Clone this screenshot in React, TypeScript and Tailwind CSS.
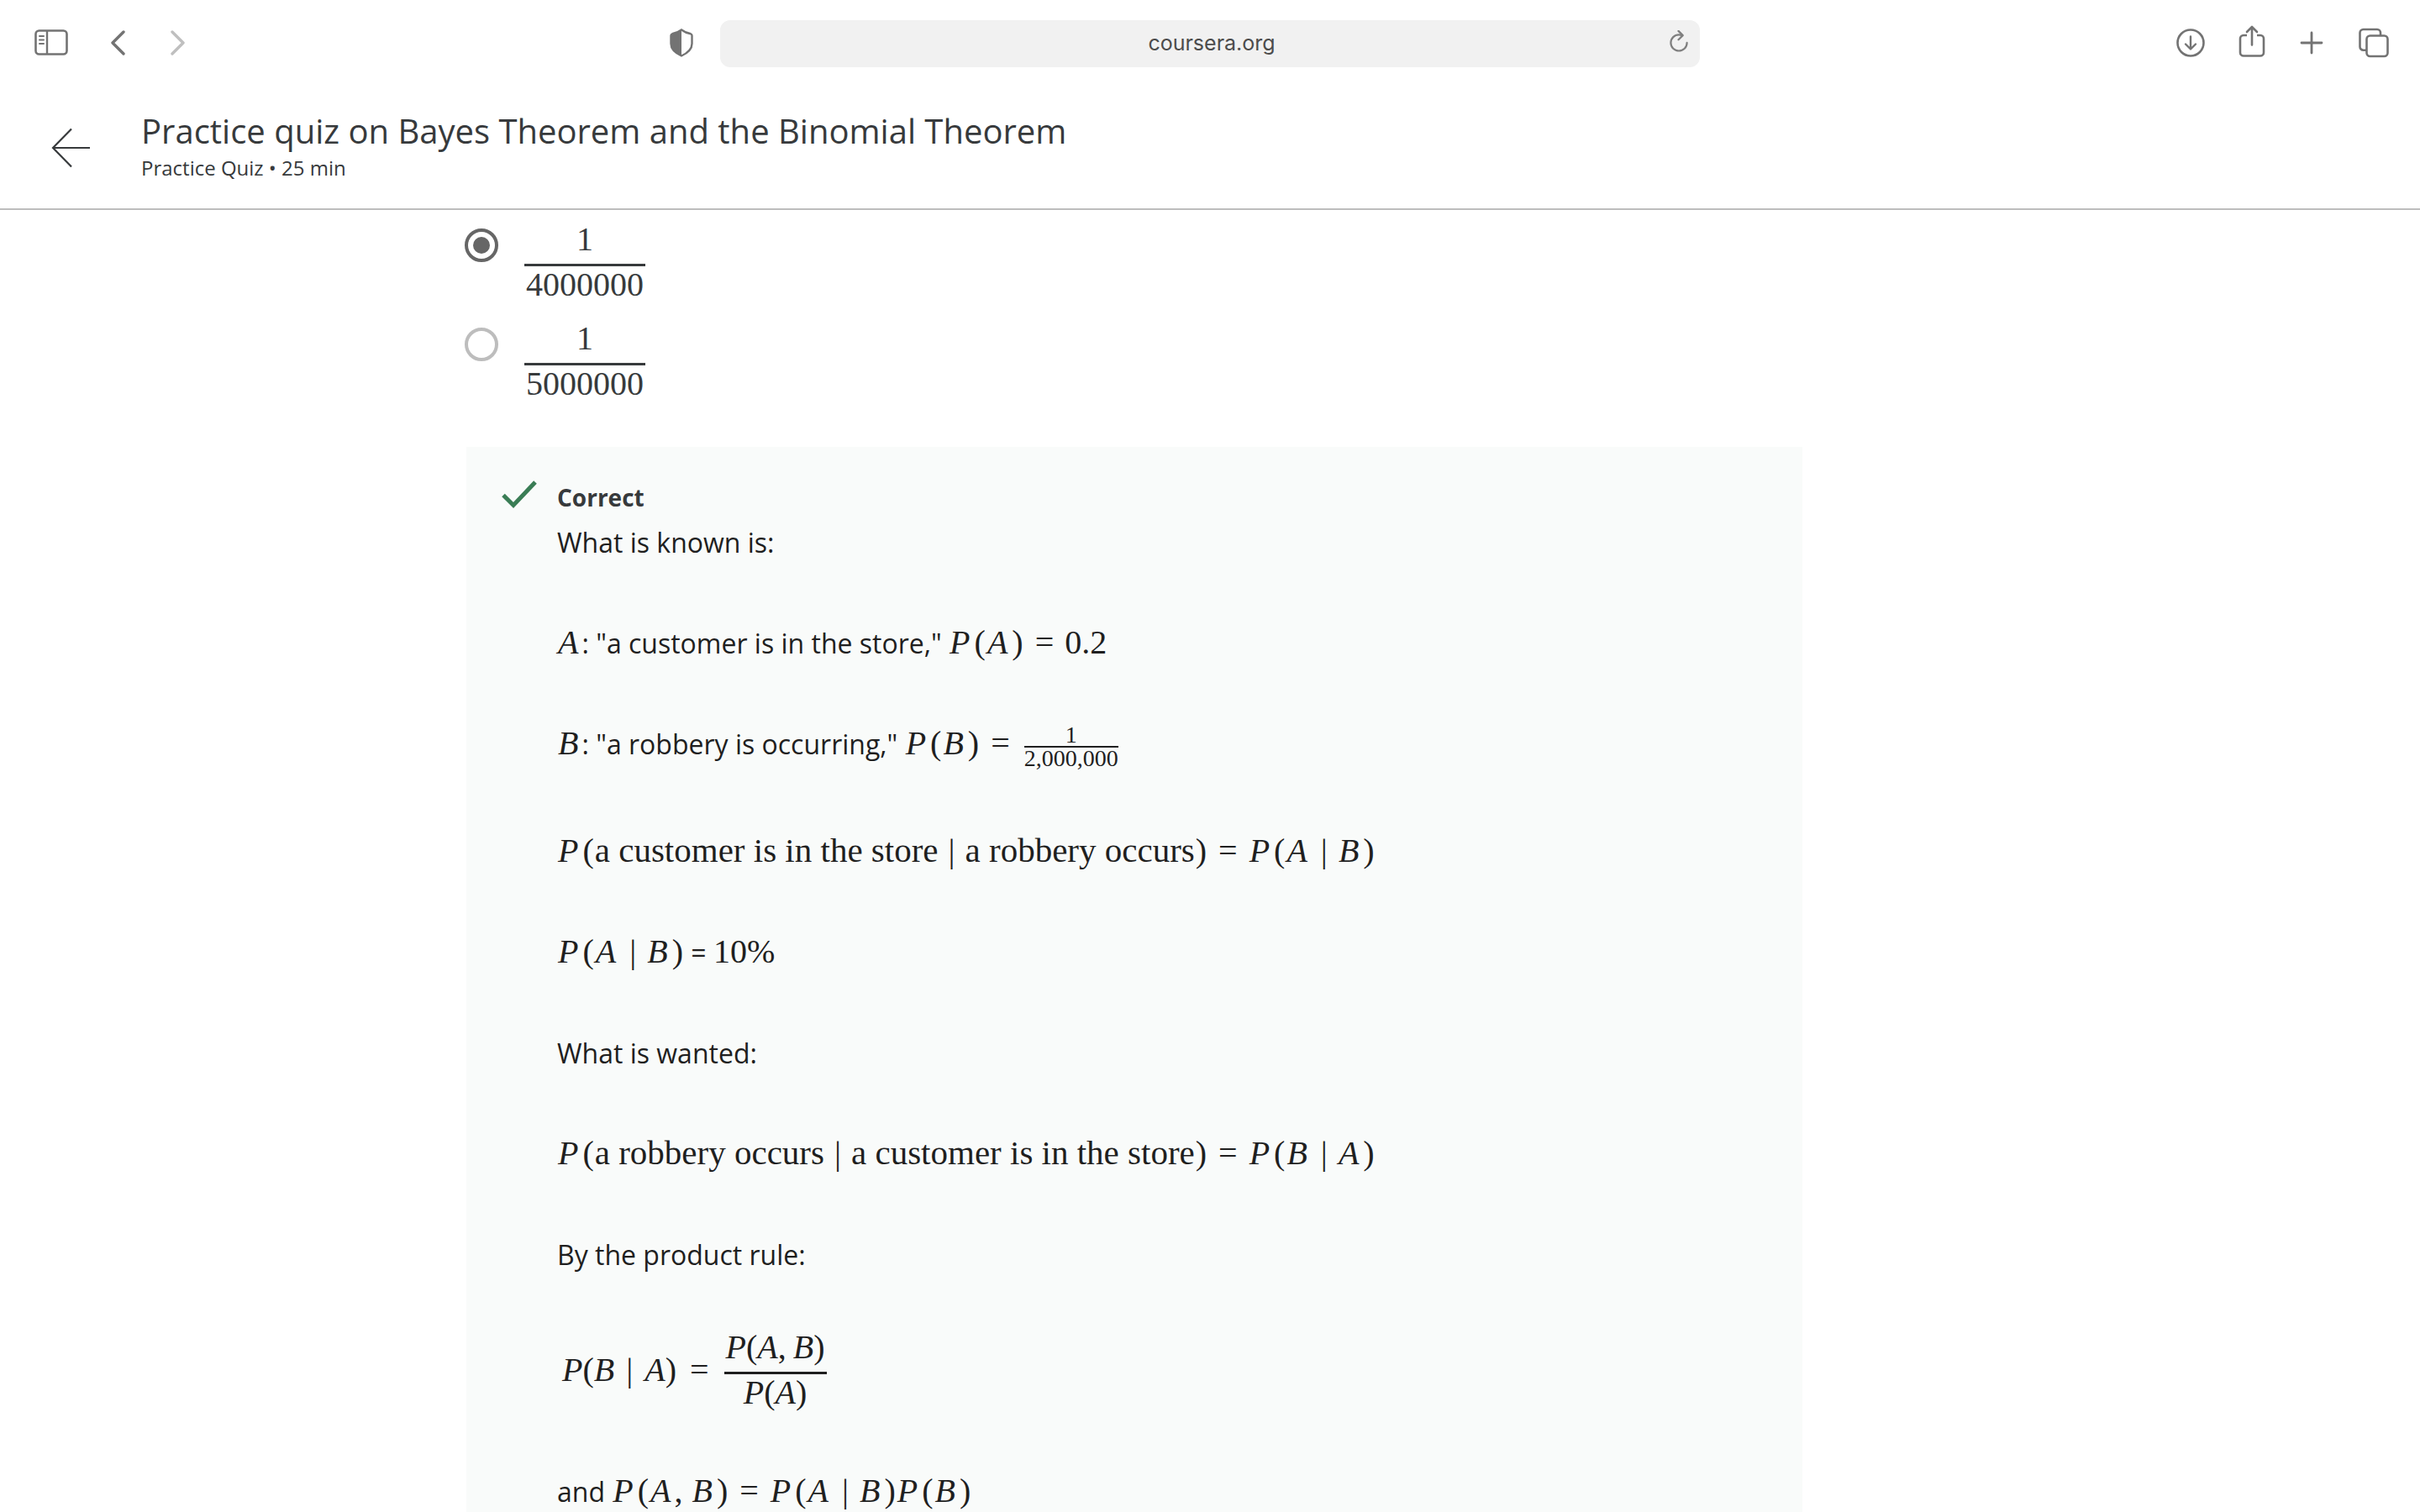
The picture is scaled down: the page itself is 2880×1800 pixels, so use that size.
import type { ReactNode } from "react";

const iconButton = "flex shrink-0 items-center justify-center text-[#737373]";

/* ---------- math helpers ---------- */

function M({ children }: { children: ReactNode }) {
  return (
    <span className="whitespace-nowrap font-['Liberation_Serif',serif] text-[40px] leading-none">
      {children}
    </span>
  );
}

function V({ children }: { children: ReactNode }) {
  return <i className="pl-px pr-[4px]">{children}</i>;
}

function Words({ children }: { children: ReactNode }) {
  return <span className="text-[41px] leading-none">{children}</span>;
}

function Paren({ children }: { children: ReactNode }) {
  return <span className="px-px">{children}</span>;
}

function Bar() {
  return <span className="mx-3">|</span>;
}

function Eq() {
  return <span className="mx-[13px]">=</span>;
}

function P({ children }: { children: ReactNode }) {
  return (
    <>
      <V>P</V>
      <Paren>(</Paren>
      {children}
      <Paren>)</Paren>
    </>
  );
}

function Fraction({ top, bottom }: { top: ReactNode; bottom: ReactNode }) {
  return (
    <span className="inline-flex flex-col items-stretch text-center font-['Liberation_Serif',serif] text-[40px] leading-none">
      <span className="mb-[9px] px-[2px]">{top}</span>
      <span className="h-[3px] bg-current" />
      <span className="mt-[2px] px-[2px]">{bottom}</span>
    </span>
  );
}

/* ---------- browser toolbar ---------- */

function Toolbar() {
  return (
    <div className="grid grid-cols-[1fr_1166px_1fr] items-center bg-white py-6">
      <div className="flex items-center pb-[2px] pl-[41px] pr-8">
        <button type="button" aria-label="Show sidebar" className={iconButton}>
          <svg width="40" height="32" viewBox="0 0 40 32" fill="none" stroke="currentColor">
            <rect x="1.5" y="1.5" width="37" height="28" rx="4" strokeWidth="2.6" />
            <path d="M15 2v27" strokeWidth="2.4" />
            <path d="M6 8h5M6 12.500h5M6 17h5" strokeWidth="2" strokeLinecap="round" />
          </svg>
        </button>
        <button type="button" aria-label="Back" className={`${iconButton} ml-[50px]`}>
          <svg width="20" height="30" viewBox="0 0 20 30" fill="none" stroke="currentColor" strokeWidth="3.400" strokeLinecap="round" strokeLinejoin="round">
            <path d="M16 2L3 15l13 13" />
          </svg>
        </button>
        <button type="button" aria-label="Forward" className="ml-[50px] flex shrink-0 text-[#bfbfbf]">
          <svg width="20" height="30" viewBox="0 0 20 30" fill="none" stroke="currentColor" strokeWidth="3.400" strokeLinecap="round" strokeLinejoin="round">
            <path d="M4 2l13 13L4 28" />
          </svg>
        </button>
        <button type="button" aria-label="Privacy report" className={`${iconButton} ml-auto`}>
          <svg width="28" height="34" viewBox="0 0 28 34" fill="none">
            <path d="M14 1.500c3.500 2.700 7 4 11 4.800 1 .3 1.500 1 1.500 2V18c0 7-5 11-12.500 14.500C6.500 29 1.500 25 1.500 18V8.300c0-1 .5-1.700 1.500-2C7 5.500 10.500 4.200 14 1.500z" stroke="currentColor" strokeWidth="2.400" />
            <path d="M14 1.500V32.500C6.500 29 1.500 25 1.500 18V8.300c0-1 .5-1.700 1.500-2C7 5.500 10.500 4.200 14 1.500z" fill="currentColor" />
          </svg>
        </button>
      </div>

      <div className="relative">
        <input
          type="text"
          aria-label="Address"
          defaultValue="coursera.org"
          className="block h-14 w-full rounded-xl bg-[#f1f1f1] pb-[2px] pl-1 text-center font-['Inter',sans-serif] text-[25px] text-[#4c4c4c] outline-none"
        />
        <button type="button" aria-label="Reload" className="absolute right-3 top-3 text-[#7f7f7f]">
          <svg width="24" height="28" viewBox="0 0 24 28" fill="none" stroke="currentColor" strokeWidth="2.200" strokeLinecap="round" strokeLinejoin="round">
            <path d="M15 6.200C13.800 5.600 12.300 5.300 11 5.300a9.600 9.600 0 1 0 9.600 9.600" />
            <path d="M10.500 .9L15.700 6.100l-5.200 5.200" />
          </svg>
        </button>
      </div>

      <div className="flex items-center justify-end pb-[2px] pr-9">
        <button type="button" aria-label="Downloads" className={iconButton}>
          <svg width="34" height="34" viewBox="0 0 34 34" fill="none" stroke="currentColor" strokeLinecap="round" strokeLinejoin="round">
            <circle cx="17" cy="17" r="15.500" strokeWidth="2.600" />
            <path d="M17 9.500V24M11 18.500l6 6 6-6" strokeWidth="2.400" />
          </svg>
        </button>
        <button type="button" aria-label="Share" className={`${iconButton} ml-[40px] pb-1`}>
          <svg width="32" height="38" viewBox="0 0 32 38" fill="none" stroke="currentColor" strokeWidth="2.600" strokeLinecap="round" strokeLinejoin="round">
            <path d="M10 12H6a4 4 0 0 0-4 4v16.500a4 4 0 0 0 4 4h20a4 4 0 0 0 4-4V16a4 4 0 0 0-4-4h-4" strokeLinecap="butt" />
            <path d="M16 23.500V2M10 8l6-6 6 6" />
          </svg>
        </button>
        <button type="button" aria-label="New tab" className={`${iconButton} ml-[41px]`}>
          <svg width="28" height="28" viewBox="0 0 28 28" fill="none" stroke="currentColor" strokeWidth="2.800" strokeLinecap="round">
            <path d="M14 2v24M2 14h24" />
          </svg>
        </button>
        <button type="button" aria-label="Show all tabs" className={`${iconButton} ml-[41px]`}>
          <svg width="38" height="36" viewBox="0 0 38 36" fill="none" stroke="currentColor" strokeWidth="2.600">
            <path d="M10 26.700H6.500a4 4 0 0 1-4-4V6a4 4 0 0 1 4-4H23a4 4 0 0 1 4 4v4" />
            <rect x="10.500" y="9.500" width="25" height="24.500" rx="4" />
          </svg>
        </button>
      </div>
    </div>
  );
}

/* ---------- quiz header ---------- */

function QuizHeader() {
  return (
    <header className="flex h-[146px] shrink-0 items-center border-b-2 border-[#bdbdbd] bg-white pl-[60px] text-[#373a3c]">
      <button type="button" aria-label="Back to course" className="flex shrink-0">
        <svg width="48" height="48" viewBox="0 0 48 48" fill="none" stroke="currentColor" strokeWidth="2.200">
          <path d="M25 1.500L3 24l22 22.500M3 24h44" />
        </svg>
      </button>
      <div className="ml-[60px]">
        <h1 className="text-[40px] leading-[48px]">
          Practice quiz on Bayes Theorem and the Binomial Theorem
        </h1>
        <p className="text-[24px] leading-[40px]">Practice Quiz • 25 min</p>
      </div>
    </header>
  );
}

/* ---------- answers ---------- */

function Option({ value, checked }: { value: string; checked?: boolean }) {
  return (
    <label className="flex items-start text-[#373a3c]">
      <input
        type="radio"
        name="answer"
        value={value}
        aria-label={`1/${value}`}
        defaultChecked={checked}
        className="mt-[7px] flex size-10 shrink-0 appearance-none items-center justify-center rounded-full border-4 border-[#bdbdbd] checked:border-[#666666] checked:before:size-5 checked:before:rounded-full checked:before:bg-[#666666] checked:before:content-['']"
      />
      <span className="ml-[31px] flex">
        <Fraction top="1" bottom={value} />
      </span>
    </label>
  );
}

/* ---------- feedback ---------- */

function Feedback() {
  return (
    <section className="mt-[55px] flex items-start bg-[#f9fbfa] pb-16 pl-[42px] pr-10 pt-10 text-[#1f1f1f]">
      <svg width="42" height="34" viewBox="0 0 42 34" fill="none" stroke="#3a7d55" strokeWidth="5" className="shrink-0">
        <path d="M2 17.500L14 29.500 40 2" />
      </svg>
      <div className="ml-6 min-w-0">
        <h2 className="text-[28px] font-bold leading-[40px] text-[#373a3c]">Correct</h2>
        <div className="mt-[10px] flex flex-col gap-[72px] text-[32px] leading-[48px]">
          <p>What is known is:</p>
          <p>
            <M>
              <V>A</V>
            </M>
            : "a customer is in the store,"{" "}
            <M>
              <P>
                <V>A</V>
              </P>
              <Eq />
              0.2
            </M>
          </p>
          <p className="pb-[2px]">
            <M>
              <V>B</V>
            </M>
            : "a robbery is occurring,"{" "}
            <M>
              <P>
                <V>B</V>
              </P>
              <Eq />
              <span className="ml-1 inline-flex flex-col items-stretch text-center align-middle text-[28px] leading-[26px]">
                <span>1</span>
                <span className="h-[2px] bg-current" />
                <span>2,000,000</span>
              </span>
            </M>
          </p>
          <p>
            <M>
              <P>
                <Words>a customer is in the store</Words>
                <Bar />
                <Words>a robbery occurs</Words>
              </P>
              <Eq />
              <P>
                <V>A</V>
                <Bar />
                <V>B</V>
              </P>
            </M>
          </p>
          <p>
            <M>
              <P>
                <V>A</V>
                <Bar />
                <V>B</V>
              </P>
            </M>{" "}
            = <M>10%</M>
          </p>
          <p>What is wanted:</p>
          <p>
            <M>
              <P>
                <Words>a robbery occurs</Words>
                <Bar />
                <Words>a customer is in the store</Words>
              </P>
              <Eq />
              <P>
                <V>B</V>
                <Bar />
                <V>A</V>
              </P>
            </M>
          </p>
          <p>By the product rule:</p>
          <div className="-mt-[6px] mb-[2px] flex items-center pl-[6px]">
            <M>
              <i>P</i>(<i>B</i>
              <span className="mx-[14px]">|</span>
              <i>A</i>)<span className="ml-4">=</span>
            </M>
            <span className="ml-[18px] flex">
              <Fraction
                top={
                  <>
                    <i>P</i>(<i>A</i>,<i className="ml-2">B</i>)
                  </>
                }
                bottom={
                  <>
                    <i>P</i>(<i>A</i>)
                  </>
                }
              />
            </span>
          </div>
          <p>
            and{" "}
            <M>
              <P>
                <V>A</V>,<V> B</V>
              </P>
              <Eq />
              <P>
                <V>A</V>
                <Bar />
                <V>B</V>
              </P>
              <P>
                <V>B</V>
              </P>
            </M>
          </p>
        </div>
      </div>
    </section>
  );
}

export default function App() {
  return (
    <div className="flex h-screen flex-col overflow-hidden bg-white font-['Open_Sans',sans-serif]">
      <Toolbar />
      <QuizHeader />
      <main className="min-h-0 flex-1 overflow-hidden pl-[555px] pr-[735px] pt-[15px]">
        <div role="radiogroup" aria-label="Answers" className="-ml-[2px] flex flex-col gap-6">
          <Option value="4000000" checked />
          <Option value="5000000" />
        </div>
        <Feedback />
      </main>
    </div>
  );
}
